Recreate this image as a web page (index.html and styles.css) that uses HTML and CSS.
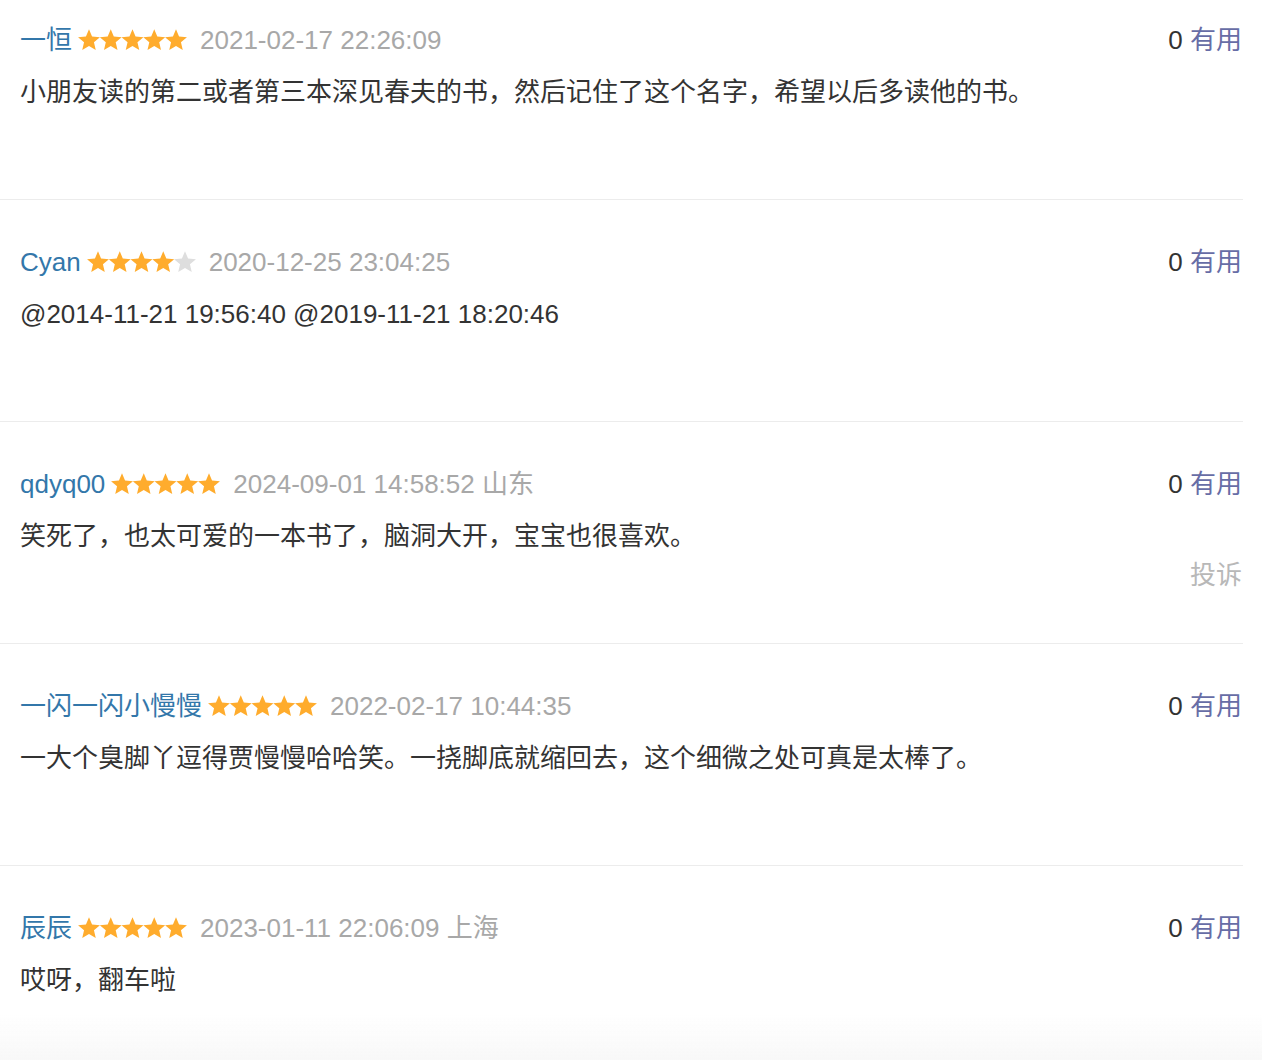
FILE: index.html
```html
<!DOCTYPE html>
<html lang="zh-CN">
<head>
<meta charset="utf-8">
<link rel="stylesheet" href="styles.css">
</head>
<body>
<svg width="0" height="0" class="defs">
  <defs>
    <path id="star" d="M11 .2L14.06 7.49 21.94 8.15 15.95 13.31 17.76 21 11 16.9 4.24 21 6.05 13.31 .06 8.15 7.94 7.49Z"/>
  </defs>
</svg>
<div class="list">
  <div class="item first">
    <div class="main">
      <div class="head">
        <a class="name">一恒</a>
        <span class="stars"><svg viewBox="0 0 109 22"><use href="#star" x="0"/><use href="#star" x="21.75"/><use href="#star" x="43.5"/><use href="#star" x="65.25"/><use href="#star" x="87"/></svg></span>
        <span class="date">2021-02-17 22:26:09</span>
      </div>
      <p class="body">小朋友读的第二或者第三本深见春夫的书，然后记住了这个名字，希望以后多读他的书。</p>
    </div>
    <div class="side"><div class="vote"><span class="count">0</span> <a class="useful">有用</a></div></div>
  </div>
  <div class="item">
    <div class="main">
      <div class="head">
        <a class="name">Cyan</a>
        <span class="stars"><svg viewBox="0 0 109 22"><use href="#star" x="0"/><use href="#star" x="21.75"/><use href="#star" x="43.5"/><use href="#star" x="65.25"/><use href="#star" x="87" class="off"/></svg></span>
        <span class="date">2020-12-25 23:04:25</span>
      </div>
      <p class="body">@2014-11-21 19:56:40 @2019-11-21 18:20:46</p>
    </div>
    <div class="side"><div class="vote"><span class="count">0</span> <a class="useful">有用</a></div></div>
  </div>
  <div class="item">
    <div class="main">
      <div class="head">
        <a class="name">qdyq00</a>
        <span class="stars"><svg viewBox="0 0 109 22"><use href="#star" x="0"/><use href="#star" x="21.75"/><use href="#star" x="43.5"/><use href="#star" x="65.25"/><use href="#star" x="87"/></svg></span>
        <span class="date">2024-09-01 14:58:52 山东</span>
      </div>
      <p class="body">笑死了，也太可爱的一本书了，脑洞大开，宝宝也很喜欢。</p>
    </div>
    <div class="side"><div class="vote"><span class="count">0</span> <a class="useful">有用</a></div><a class="report">投诉</a></div>
  </div>
  <div class="item">
    <div class="main">
      <div class="head">
        <a class="name">一闪一闪小慢慢</a>
        <span class="stars"><svg viewBox="0 0 109 22"><use href="#star" x="0"/><use href="#star" x="21.75"/><use href="#star" x="43.5"/><use href="#star" x="65.25"/><use href="#star" x="87"/></svg></span>
        <span class="date">2022-02-17 10:44:35</span>
      </div>
      <p class="body">一大个臭脚丫逗得贾慢慢哈哈笑。一挠脚底就缩回去，这个细微之处可真是太棒了。</p>
    </div>
    <div class="side"><div class="vote"><span class="count">0</span> <a class="useful">有用</a></div></div>
  </div>
  <div class="item">
    <div class="main">
      <div class="head">
        <a class="name">辰辰</a>
        <span class="stars"><svg viewBox="0 0 109 22"><use href="#star" x="0"/><use href="#star" x="21.75"/><use href="#star" x="43.5"/><use href="#star" x="65.25"/><use href="#star" x="87"/></svg></span>
        <span class="date">2023-01-11 22:06:09 上海</span>
      </div>
      <p class="body">哎呀，翻车啦</p>
    </div>
    <div class="side"><div class="vote"><span class="count">0</span> <a class="useful">有用</a></div></div>
  </div>
</div>
<div class="fade"></div>
</body>
</html>
```
FILE: styles.css
```css
* { box-sizing: border-box; }
html, body { margin: 0; padding: 0; background: #fff; }
body {
  font-family: "Liberation Sans", "Noto Sans CJK SC", sans-serif;
  font-size: 26px;
  color: #333;
  overflow: hidden;
}
.defs { position: absolute; }
.list { width: 1243px; }
.item {
  display: flex;
  justify-content: space-between;
  height: 222px;
  padding: 42px 1px 0 20px;
  border-bottom: 1px solid #ececec;
}
.item.first { height: 200px; padding-top: 20px; }
.head {
  display: flex;
  align-items: center;
  height: 40px;
  line-height: 40px;
  white-space: nowrap;
}
.name { color: #3377aa; }
.stars { display: inline-flex; margin: 0 13px 0 6px; }
.stars svg { width: 109px; height: 22px; fill: #ffac2d; }
.stars .off { fill: #dedede; }
.date { color: #a8a8a8; }
.body { margin: 12px 0 0; line-height: 40px; }
.side {
  display: flex;
  flex-direction: column;
  align-items: flex-end;
  line-height: 40px;
  white-space: nowrap;
}
.count { color: #333; }
.useful { color: #676da6; }
.report { color: #b8b8b8; margin-top: 51px; }
.fade {
  position: fixed;
  left: 0; right: 0; bottom: 0;
  height: 45px;
  background: linear-gradient(rgba(248,248,248,0), #f8f8f8);
}
```
